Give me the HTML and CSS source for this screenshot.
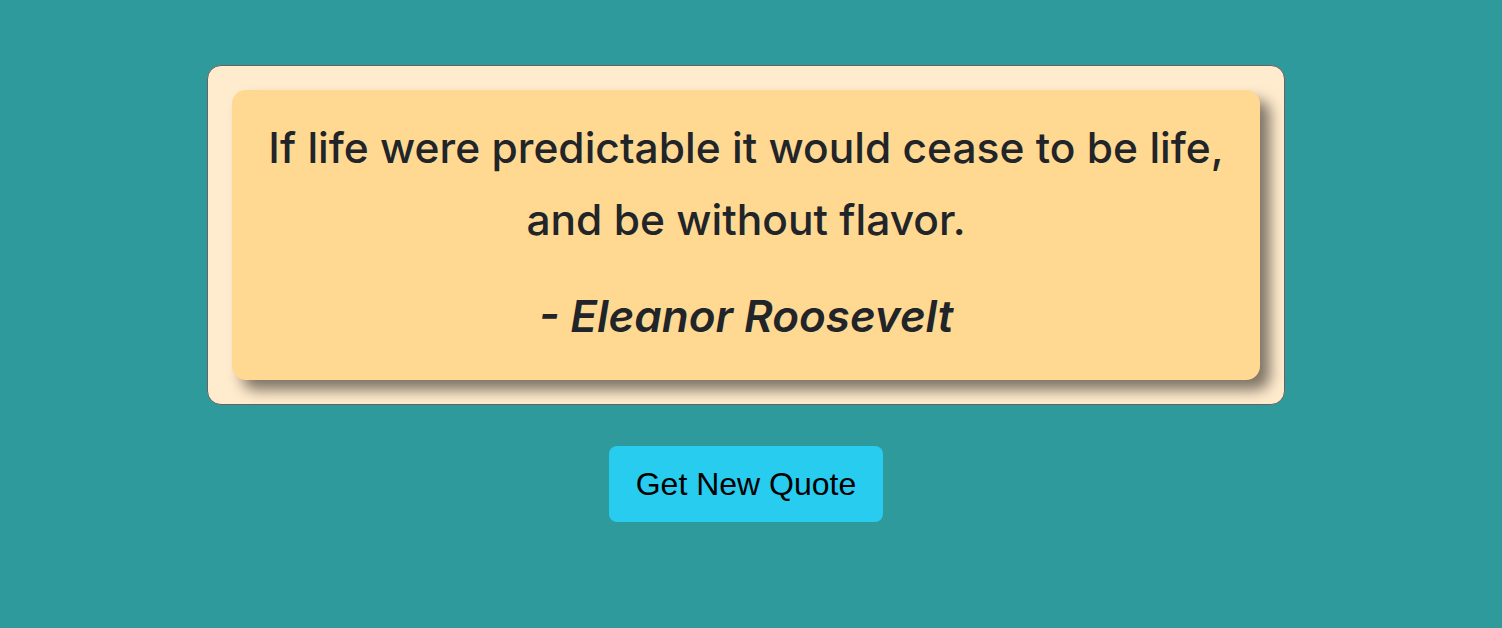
FILE: index.html
```html
<!DOCTYPE html>
<html lang="en">
<head>
<meta charset="utf-8">
<title>Quote</title>
<link rel="stylesheet" href="styles.css">
</head>
<body>
<main class="page">
  <section class="frame">
    <div class="card">
      <p class="quote">If life were predictable it would cease to be life, and be without flavor.</p>
      <p class="author">- Eleanor Roosevelt</p>
    </div>
  </section>
  <button class="btn" type="button">Get New Quote</button>
</main>
</body>
</html>
```

FILE: styles.css
```css
html, body {
  margin: 0;
  padding: 0;
}
body {
  background: #2e9a9c;
  font-family: Inter, "Noto Sans", sans-serif;
  color: #212529;
  height: 628px;
  overflow: hidden;
}
.page {
  display: flex;
  flex-direction: column;
  align-items: center;
  padding: 65px 10px 0 0;
  gap: 41px;
}
.frame {
  box-sizing: border-box;
  width: 1078px;
  background: #ffebcd;
  border: 1px solid #6a6262;
  border-radius: 14px;
  padding: 24px;
}
.card {
  background: #ffd992;
  border-radius: 14px;
  box-shadow: 10px 10px 14px rgba(0, 0, 0, 0.5);
  padding: 22px 20px 34px;
  text-align: center;
}
.quote {
  margin: 0;
  font-size: 42.5px;
  font-weight: 450;
  line-height: 72px;
}
.author {
  margin: 30px 0 0;
  font-size: 44px;
  line-height: 60px;
  font-weight: 600;
  font-style: italic;
}
.btn {
  font-family: "Liberation Sans", Arial, sans-serif;
  font-size: 32px;
  color: #000;
  background: #28ccef;
  border: none;
  border-radius: 8px;
  padding: 0 27px;
  height: 76px;
}
```
